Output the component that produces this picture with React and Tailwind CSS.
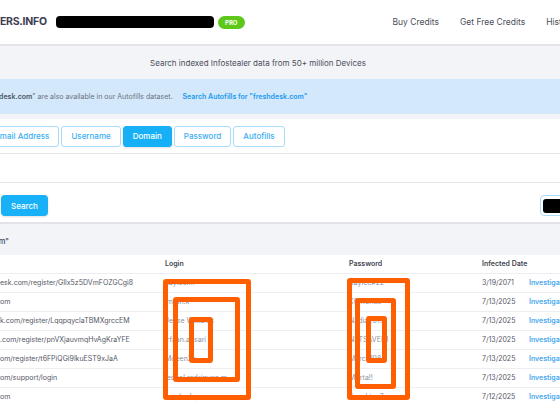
import React from 'react';

const rows = [
  { url: 'esk.com/register/GIlx5z5DVmFOZGCgi8', login: 'kaylee.m', pass: 'Kaylee#22', date: '3/19/2071' },
  { url: 'om', login: 'imran.k', pass: 'K0rnel1us', date: '7/13/2025' },
  { url: 'k.com/register/LqqpqyclaTBMXgrccEM', login: 'Jesse Williams', pass: 'Nadia2019', date: '7/13/2025' },
  { url: '.com/register/pnVXjauvmqHvAgKraYFE', login: 'irfaan.ansari', pass: 'NETSAVER1', date: '7/13/2025' },
  { url: 'om/register/t6FPiQGi9lkuEST9xJaA', login: 'Moeen2k', pass: 'Marco1984', date: '7/13/2025' },
  { url: 'om/support/login', login: 'leonel.rodriguez.m', pass: 'M4rta!!', date: '7/13/2025' },
  { url: 'om', login: 'sandra.lopes', pass: 'Sunshine7', date: '7/12/2025' },
];

const tabs = ['Email Address', 'Username', 'Domain', 'Password', 'Autofills'];

export default function App() {
  return (
    <div className="relative w-[560px] h-[404px] overflow-hidden bg-[#f3f4f8] font-['Inter',sans-serif]">
      {/* Header */}
      <div className="h-[46px] bg-white border-b-2 border-[#e4e5ea] flex items-center">
        <span className="text-[10.5px] font-bold text-[#3d3d52] tracking-tight">ERS.INFO</span>
        <div className="ml-[9px] w-[158px] h-[12px] rounded-[4px] bg-black" />
        <span className="ml-[4px] w-[27px] h-[13px] rounded-full bg-[#5dc81a] text-white text-[6px] font-bold flex items-center justify-center">PRO</span>
        <div className="ml-auto flex items-center gap-[21px] text-[8.5px] text-[#4b4f5c] -mr-[15px]">
          <span>Buy Credits</span>
          <span>Get Free Credits</span>
          <span>History</span>
        </div>
      </div>

      {/* Subtitle */}
      <div className="h-[33px] flex items-center justify-center pr-[44px] pt-[1px] text-[8px] text-[#4a4d58]">
        Search indexed Infostealer data from 50+ million Devices
      </div>

      {/* Autofills notice */}
      <div className="h-[35px] bg-[#d3e8fa] flex items-center pt-[2px] text-[7px] whitespace-nowrap">
        <span className="-ml-[59px] text-[#6b7280]">
          Results for "<span className="font-semibold text-[#4b5563]">freshdesk.com</span>" are also available in our Autofills dataset.
        </span>
        <span className="ml-[10px] font-semibold text-[#1b9af0]">Search Autofills for "freshdesk.com"</span>
      </div>

      {/* Search panel */}
      <div className="mt-[5px] bg-white border-b-2 border-[#e2e3e8]">
        <div className="h-[34px] flex items-center gap-[2px]">
          {tabs.map((t) => (
            <div
              key={t}
              className={`h-[21px] flex items-center px-[9px] rounded-[3px] text-[8px] font-medium border ${
                t === 'Domain'
                  ? 'bg-[#17b0f6] border-[#17b0f6] text-white shadow-sm'
                  : 'border-[#a9dcfb] text-[#39aef2]'
              } ${t === 'Email Address' ? '-ml-[15px]' : ''}`}
            >
              {t}
            </div>
          ))}
        </div>
        <div className="h-[30px] border-t border-b border-[#e3e4e8]" />
        <div className="h-[39px] flex items-center justify-between pl-[1px] pt-[6px]">
          <button className="h-[21px] px-[10px] rounded-[4px] bg-[#18b1f7] text-white text-[8px] font-medium shadow-sm">
            Search
          </button>
          <div className="w-[24px] h-[21px] -mr-[4px] rounded-[4px] border border-[#a9dcfb] bg-white flex items-center pl-[2px]">
            <div className="w-full h-[14px] rounded-[3px] bg-black" />
          </div>
        </div>
      </div>

      {/* Results heading */}
      <div className="h-[31px] flex items-center pt-[4px] text-[7.5px] font-medium text-[#3f4350] whitespace-nowrap">
        <span className="-ml-[120px] w-[129px] text-right">Results for "freshdesk.com"</span>
      </div>

      {/* Table */}
      <div className="bg-white text-[7px] text-[#545866]">
        <div className="h-[19px] pt-[1px] grid grid-cols-[165px_184px_133px_47px_1fr] items-center border-b border-[#eceef2] font-semibold text-[#3f4350]">
          <span />
          <span>Login</span>
          <span>Password</span>
          <span>Infected Date</span>
          <span />
        </div>
        {rows.map((r, i) => (
          <div
            key={i}
            className="h-[19px] grid grid-cols-[165px_184px_133px_47px_1fr] items-center border-b border-[#eceef2] whitespace-nowrap"
          >
            <span className="overflow-hidden">{r.url}</span>
            <span className="text-[#8d939d]">{r.login}</span>
            <span className="text-[#8d939d]">{r.pass}</span>
            <span>{r.date}</span>
            <span className="text-[#4aa8ee] font-semibold">Investigate</span>
          </div>
        ))}
      </div>

      {/* Orange markers drawn over the table */}
      <div className="absolute left-[163px] top-[279px] w-[88px] h-[121px] border-[5px] border-[#ff5f00] rounded-[3px]" />
      <div className="absolute left-[173px] top-[297px] w-[67px] h-[85px] border-[5px] border-[#ff5f00] rounded-[3px]" />
      <div className="absolute left-[189px] top-[317px] w-[24px] h-[46px] border-[5px] border-[#ff5f00] rounded-[3px]" />

      <div className="absolute left-[347px] top-[278px] w-[63px] h-[122px] border-[5px] border-[#ff5f00] rounded-[3px]" />
      <div className="absolute left-[355px] top-[298px] w-[41px] h-[91px] border-[5px] border-[#ff5f00] rounded-[3px]" />
      <div className="absolute left-[366px] top-[316px] w-[21px] h-[47px] border-[5px] border-[#ff5f00] rounded-[3px]" />
    </div>
  );
}
